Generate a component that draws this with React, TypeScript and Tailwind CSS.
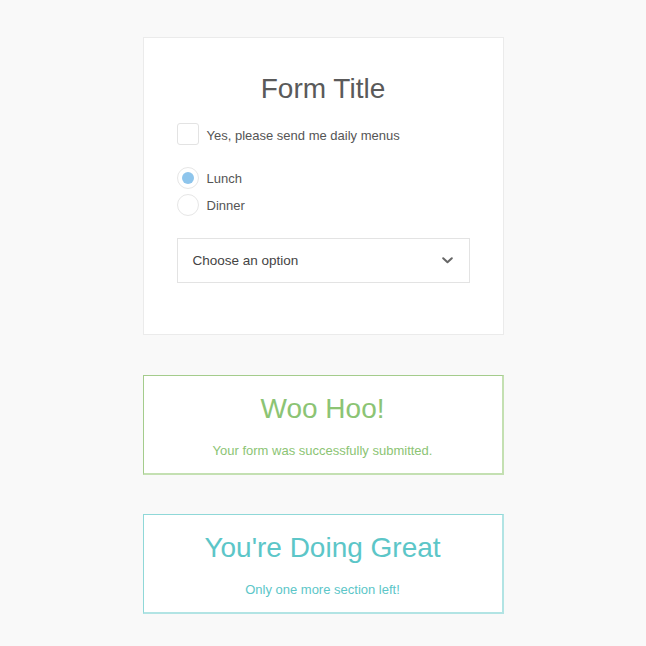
import React, { useState } from 'react';

const font = { fontFamily: '"Liberation Sans", Arial, sans-serif' };

const Radio: React.FC<{ label: string; checked: boolean; onSelect: () => void }> = ({ label, checked, onSelect }) => (
  <label className="flex items-center gap-2 cursor-pointer" onClick={onSelect}>
    <span className="w-[22px] h-[22px] rounded-full border border-[#e6e6e6] bg-white flex items-center justify-center">
      {checked && <span className="w-[12px] h-[12px] rounded-full bg-[#8ec5ec]" />}
    </span>
    <span className="text-[13px] text-[#555] mt-[2px]">{label}</span>
  </label>
);

export default function App() {
  const [meal, setMeal] = useState('lunch');
  const [daily, setDaily] = useState(false);

  return (
    <div className="min-h-[646px] bg-[#f9f9f9] flex flex-col items-center pt-[37px]" style={font}>
      {/* Form card */}
      <div className="w-[361px] bg-white border border-[#ebebeb] px-[33px] pt-[33px] pb-[51px]">
        <h1 className="text-center text-[28px] font-light text-[#5a5a5a] leading-[36px]">Form Title</h1>

        <label className="mt-[16px] flex items-center gap-2 cursor-pointer" onClick={() => setDaily(!daily)}>
          <span className="w-[22px] h-[22px] rounded-[3px] border border-[#e3e3e3] bg-white" />
          <span className="text-[13px] text-[#555] mt-[3px]">Yes, please send me daily menus</span>
        </label>

        <div className="mt-[21px] flex flex-col gap-[5px]">
          <Radio label="Lunch" checked={meal === 'lunch'} onSelect={() => setMeal('lunch')} />
          <Radio label="Dinner" checked={meal === 'dinner'} onSelect={() => setMeal('dinner')} />
        </div>

        <div className="mt-[22px] h-[45px] border border-[#e3e3e3] flex items-center justify-between pl-[15px] pr-[16px]">
          <span className="text-[13.5px] text-[#444] mt-[2px]">Choose an option</span>
          <svg width="11" height="7" viewBox="0 0 11 7" fill="none">
            <path d="M1.2 1.2 L5.5 5.3 L9.8 1.2" stroke="#666" strokeWidth="2" strokeLinecap="round" strokeLinejoin="round" />
          </svg>
        </div>
      </div>

      {/* Success */}
      <div className="mt-[40px] w-[361px] h-[100px] bg-white border border-[#a4cc8c] border-b-2 border-r-2 border-b-[#c4e0b2] border-r-[#c4e0b2] flex flex-col items-center pt-[15px]">
        <h2 className="text-[28px] font-light text-[#8cc474] leading-[36px]">Woo Hoo!</h2>
        <p className="mt-[14px] text-[13px] text-[#8cc474]">Your form was successfully submitted.</p>
      </div>

      {/* Progress */}
      <div className="mt-[39px] w-[361px] h-[100px] bg-white border border-[#8fd8d8] border-b-2 border-r-2 border-b-[#b2e4e4] border-r-[#b2e4e4] flex flex-col items-center pt-[15px]">
        <h2 className="text-[28px] font-light text-[#5cc6c8] leading-[36px]">You're Doing Great</h2>
        <p className="mt-[14px] text-[13px] text-[#5cc6c8]">Only one more section left!</p>
      </div>
    </div>
  );
}
